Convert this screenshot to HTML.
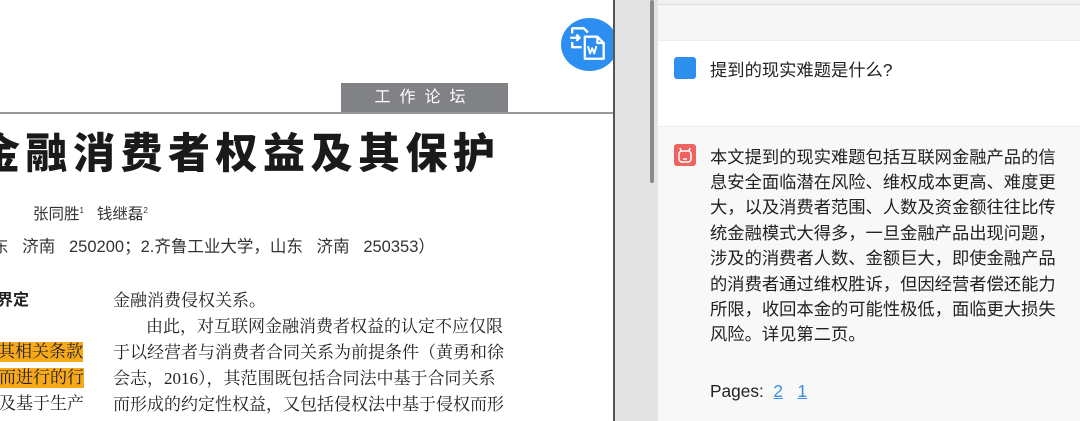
<!DOCTYPE html>
<html><head><meta charset="utf-8"><style>
*{margin:0;padding:0;box-sizing:border-box}
body{width:1080px;height:421px;overflow:hidden;position:relative;background:#fff;font-family:"Liberation Serif","Noto Serif CJK SC",serif}
.a{position:absolute;white-space:nowrap}
.s{font-family:"Liberation Sans","Noto Sans CJK SC",sans-serif}
.b{font-size:17px;color:#222;line-height:20px;letter-spacing:0px}
.r{font-family:"Liberation Sans","Noto Sans CJK SC",sans-serif;font-size:17.3px;color:#222;line-height:20px;left:710px}
</style></head><body>
<div class="a" style="left:0;top:112px;width:613px;height:2px;background:#999"></div>
<div class="a s" style="left:341px;top:83px;width:167px;height:29px;background:#808285;color:#fff;font-size:16px;line-height:29px;text-align:center;letter-spacing:9px">工作论坛</div>
<div class="a s" style="left:-22px;top:128px;font-size:42px;font-weight:900;color:#1a1a1a;letter-spacing:5.5px;line-height:52px">金融消费者权益及其保护</div>
<div class="a s" style="left:33px;top:202px;font-size:15.5px;color:#333">张同胜<sup style="font-size:8px">1</sup>&nbsp;&nbsp; 钱继磊<sup style="font-size:8px">2</sup></div>
<div class="a s" style="left:-8px;top:233px;font-size:16.5px;color:#333">东&nbsp;&nbsp; 济南&nbsp;&nbsp; 250200；2.齐鲁工业大学，山东&nbsp;&nbsp; 济南&nbsp;&nbsp; 250353）</div>
<div class="a b" style="left:-3px;top:291px;font-weight:bold;font-family:'Liberation Sans','Noto Sans CJK SC',sans-serif;font-size:16px">界定</div>
<div class="a b" style="left:-2px;top:342px;background:#f7a81b">其相关条款</div>
<div class="a b" style="left:-1px;top:368px;background:#f7a81b">而进行的行</div>
<div class="a b" style="left:-1px;top:394px">及基于生产</div>
<div class="a b" style="left:113px;top:291px">金融消费侵权关系。</div>
<div class="a b" style="left:146px;top:317px">由此，对互联网金融消费者权益的认定不应仅限</div>
<div class="a b" style="left:113px;top:343px">于以经营者与消费者合同关系为前提条件（黄勇和徐</div>
<div class="a b" style="left:113px;top:369px">会志，2016），其范围既包括合同法中基于合同关系</div>
<div class="a b" style="left:113px;top:395px">而形成的约定性权益，又包括侵权法中基于侵权而形</div>
<div class="a" style="left:561px;top:18px;width:57px;height:53px;border-radius:50%;background:#2b8ef0"></div>
<svg class="a" style="left:568px;top:24px" width="42" height="38" viewBox="0 0 40 36" fill="none" stroke="#fff" stroke-width="2.2" stroke-linejoin="round">
<path d="M4 9V4h11l4 4"/><path d="M2 13h9M8 10l3 3-3 3"/><path d="M4 17v5h9"/>
<path d="M16 12h12l6 6v15h-18z"/><path d="M28 12v6h6"/><path d="M19 21l2 7 2-5 2 5 2-7" stroke-width="1.8"/>
</svg>
<div class="a" style="left:613px;top:0;width:2px;height:421px;background:#555"></div>
<div class="a" style="left:615px;top:0;width:43px;height:421px;background:#e3e3e3"></div>
<div class="a" style="left:650px;top:0;width:4px;height:183px;background:#8a8a8a;border-radius:2px"></div>
<div class="a" style="left:658px;top:0;width:422px;height:40px;background:#f6f6f6;border-top:4px solid #f0f0f0"></div>
<div class="a" style="left:658px;top:4px;width:422px;height:1px;background:#ddd"></div>
<div class="a" style="left:658px;top:40px;width:422px;height:86px;background:#fff;border-top:1px solid #eee"></div>
<div class="a" style="left:658px;top:126px;width:422px;height:295px;background:#f8f8f8;border-top:1px solid #eee"></div>
<div class="a" style="left:674px;top:57px;width:22px;height:22px;background:#2d8ff0;border-radius:3px"></div>
<div class="a r" style="top:60px">提到的现实难题是什么?</div>
<div class="a" style="left:674px;top:144px;width:22px;height:22px;background:#ee6360;border-radius:3px"></div>
<svg class="a" style="left:674px;top:144px" width="22" height="22" viewBox="0 0 22 22" fill="none" stroke="#fff" stroke-width="1.5"><rect x="5" y="7" width="12" height="11" rx="3"/><path d="M7 7L6 4M15 7l1-3M9 12h0M13 12h0M9 15h4"/></svg>
<div class="a r" style="top:147px">本文提到的现实难题包括互联网金融产品的信</div>
<div class="a r" style="top:172px">息安全面临潜在风险、维权成本更高、难度更</div>
<div class="a r" style="top:197px">大，以及消费者范围、人数及资金额往往比传</div>
<div class="a r" style="top:223px">统金融模式大得多，一旦金融产品出现问题，</div>
<div class="a r" style="top:248px">涉及的消费者人数、金额巨大，即使金融产品</div>
<div class="a r" style="top:274px">的消费者通过维权胜诉，但因经营者偿还能力</div>
<div class="a r" style="top:299px">所限，收回本金的可能性极低，面临更大损失</div>
<div class="a r" style="top:324px">风险。详见第二页。</div>
<div class="a r" style="top:381px">Pages:&nbsp; <span style="color:#3a8ee6;text-decoration:underline">2</span>&nbsp;&nbsp; <span style="color:#3a8ee6;text-decoration:underline">1</span></div>
</body></html>
